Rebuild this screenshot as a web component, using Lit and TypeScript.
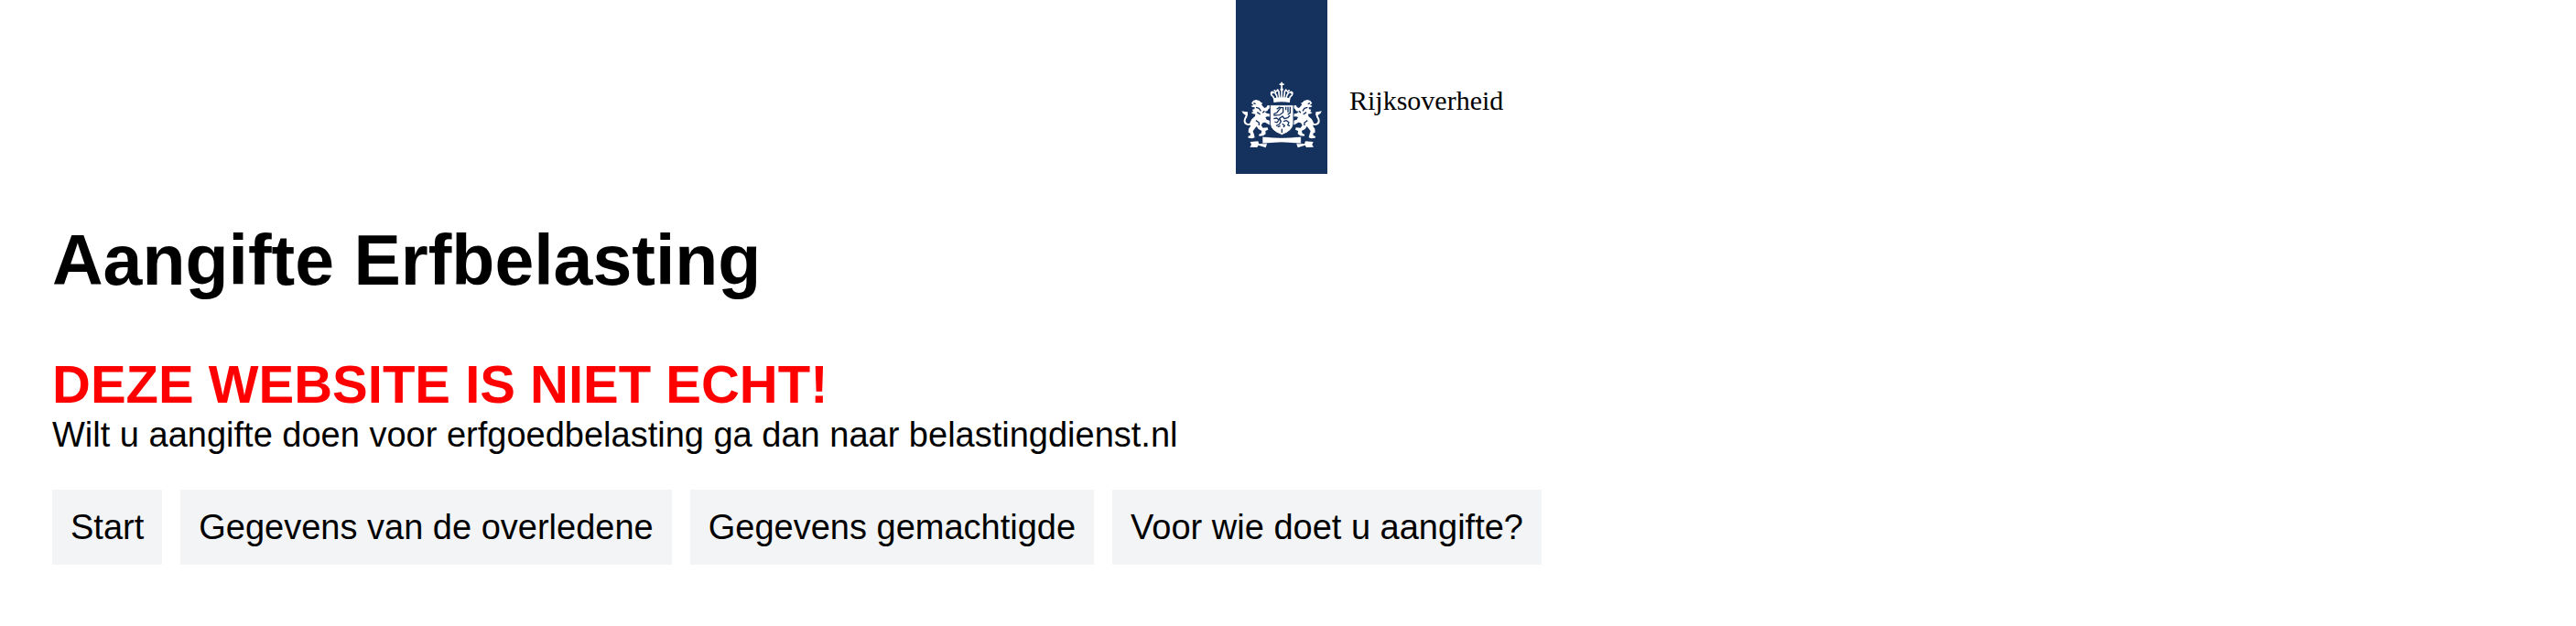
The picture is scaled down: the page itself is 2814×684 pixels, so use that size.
import { LitElement, html, css, svg } from "lit";
import { customElement } from "lit/decorators.js";

const lion = svg`
  <path d="M51 68 L57 60 L66 57 L77 60 L83 66 L88 68 L84 73 L89 79 L94 84 L100 82 L104 75 L115 76 L115 84 L108 86 L103 94 L95 96 L101 101 L116 104 L116 113 L104 112 L97 114 L101 122 L113 126 L119 140 L109 139 L96 131 L88 133 L83 141 L89 149 L104 148 L106 155 L97 159 L98 169 L90 175 L77 176 L75 171 L83 167 L85 159 L74 153 L68 144 L61 153 L56 160 L59 169 L62 181 L54 184 L41 182 L40 177 L47 174 L48 167 L41 164 L42 152 L48 144 L46 133 L52 121 L63 111 L64 104 L56 103 L50 99 L57 97 L54 89 L61 88 L62 82 L54 81 L50 77 L58 75 Z"/>
  <path class="line" d="M23 98 Q36 97 36 105 Q35 112 30 120 Q26 132 36 137 Q42 139 49 136"/>
  <path d="M19 94 L30 97 L39 97 L39 107 L31 107 L25 103 Z"/>
  <path class="cut" d="M58 68 L65 71 M66 82 L76 85 L82 94 M70 98 L80 105 M66 125 L76 132 L76 141 M94 94 L88 100"/>`;

const crownHalf = svg`
  <path class="arch" d="M126 55 Q124 46 117 42 Q113 34 120 31 L126 35 M136 54 Q135 42 129 35 Q130 27 138 27 Q143 30 141 35 L144 54"/>
  <circle cx="118" cy="34" r="4"/>
  <circle cx="127" cy="27" r="3"/>
  <circle cx="137" cy="25" r="3"/>`;

@customElement("app-root")
export class AppRoot extends LitElement {
  static styles = css`
    :host {
      display: block;
      font-family: "Liberation Sans", Arial, sans-serif;
      font-size: 38px;
      line-height: 44px;
      color: #000;
    }
    .logo {
      display: flex;
      gap: 24px;
      padding-left: calc(50% - 57px);
    }
    .ribbon {
      flex: none;
      width: 100px;
      height: 190px;
      background: #15325f;
    }
    .ribbon .line {
      fill: none;
      stroke: #fff;
      stroke-width: 6;
    }
    .ribbon .arch {
      fill: none;
      stroke: #fff;
      stroke-width: 5;
    }
    .ribbon .cut {
      fill: none;
      stroke: #15325f;
      stroke-width: 4;
    }
    .sender {
      padding-top: 92px;
      font: 30px/36px "Liberation Serif", serif;
    }
    main {
      padding: 48px 57px;
    }
    h1 {
      margin: 0 0 56px;
      font-size: 77px;
      line-height: 92px;
    }
    h2 {
      margin: 0;
      font-size: 58px;
      line-height: 67px;
      color: #f00;
    }
    p {
      margin: 0 0 38px;
    }
    nav {
      display: flex;
      flex-wrap: wrap;
      gap: 20px;
    }
    a {
      padding: 19px 20px;
      background: #f3f4f6;
      color: inherit;
      text-decoration: none;
    }
  `;

  render() {
    return html`
      <header class="logo">
        <svg class="ribbon" viewBox="0 0 300 570" fill="#fff" aria-hidden="true">
          <g transform="translate(0 270)">
            <g>${lion}</g>
            <g transform="translate(301 0) scale(-1 1)">${lion}</g>
            <path d="M148 -1 h5 v5 h5 v5 h-5 v10 h-5 v-10 h-5 v-5 h5 Z" />
            <circle cx="150.500" cy="23" r="5" />
            <path class="arch" d="M150.500 24 V56" />
            <g>${crownHalf}</g>
            <g transform="translate(301 0) scale(-1 1)">${crownHalf}</g>
            <path d="M123 52 Q150 46 178 52 L177 66 Q150 61 124 66 Z" />
            <path
              d="M112 74 H189 V136 Q187 160 151 173 Q114 160 112 136 Z"
              stroke="#15325f"
              stroke-width="3"
            />
            <path
              class="cut"
              d="M124 104 L135 99 L147 83 L155 83 L155 98 L143 107 L124 108 M134 88 L145 80 M164 80 V91 M171 80 V98 M178 80 V100 L170 106"
            />
            <path
              class="cut"
              d="M124 119 L134 117 L141 123 L135 132 L127 129 M132 142 L142 138 L148 128 L143 118 L153 111 L159 119 L170 116 L177 109 M156 128 L166 125 L174 131 L170 140 L177 143 M152 136 L160 142 L156 147 M137 146 L146 143 M151 152 V165"
              stroke-linejoin="round"
            />
            <path d="M47 195 L73 193 L76 202 L103 199 L98 214 L74 206 L70 213 L46 212 L51 204 Z" />
            <path
              d="M254 195 L228 193 L225 202 L198 199 L203 214 L227 206 L231 213 L255 212 L250 204 Z"
            />
            <path
              d="M87 178 Q150 185 214 178 V201 Q150 193 87 201 Z"
              stroke="#15325f"
              stroke-width="2"
            />
          </g>
        </svg>
        <span class="sender">Rijksoverheid</span>
      </header>
      <main>
        <h1>Aangifte Erfbelasting</h1>
        <h2>DEZE WEBSITE IS NIET ECHT!</h2>
        <p>Wilt u aangifte doen voor erfgoedbelasting ga dan naar belastingdienst.nl</p>
        <nav>
          <a href="#start">Start</a>
          <a href="#overledene">Gegevens van de overledene</a>
          <a href="#gemachtigde">Gegevens gemachtigde</a>
          <a href="#aangifte">Voor wie doet u aangifte?</a>
        </nav>
      </main>
    `;
  }
}
